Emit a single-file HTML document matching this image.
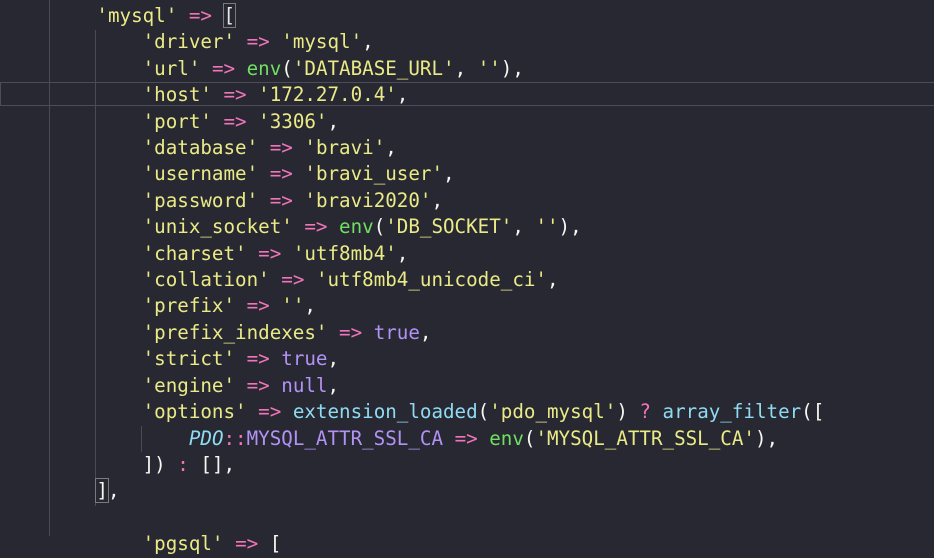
<!DOCTYPE html>
<html><head><meta charset="utf-8"><style>
html,body{margin:0;padding:0;background:#282833;width:934px;height:536px;overflow:hidden}
#c{position:absolute;left:4px;top:3px;font-family:"DejaVu Sans Mono","Liberation Mono",monospace;font-size:19.2px;line-height:26.4px;color:#f8f8f2;white-space:pre}
.s{color:#eaea86}.p{color:#f075b9}.g{color:#6fe05f}.c{color:#8fdcf2}.v{color:#b293f5}.i{color:#8fdcf2;font-style:italic}
.w{color:#e8e8e8}
.gd{position:absolute;width:1px;background:#4a4a58}
.hl{position:absolute;left:0;top:82px;width:934px;height:24px;border:1px solid #4d4d5a;border-right:none;box-sizing:border-box}
.br{outline:1px solid #7a7a80;outline-offset:0}
</style></head><body>
<div class="hl"></div>
<div class="gd" style="left:49px;top:0;height:536px"></div>
<div class="gd" style="left:95px;top:30px;height:476px"></div>
<div class="gd" style="left:141px;top:426px;height:26px"></div>
<div id="c"><span class="s">        'mysql'</span> <span class="p">=&gt;</span> <span class="w br">[</span>
<span class="s">            'driver'</span> <span class="p">=&gt;</span> <span class="s">'mysql'</span>,
<span class="s">            'url'</span> <span class="p">=&gt;</span> <span class="g">env</span>(<span class="s">'DATABASE_URL'</span>, <span class="s">''</span>),
<span class="s">            'host'</span> <span class="p">=&gt;</span> <span class="s">'172.27.0.4'</span>,
<span class="s">            'port'</span> <span class="p">=&gt;</span> <span class="s">'3306'</span>,
<span class="s">            'database'</span> <span class="p">=&gt;</span> <span class="s">'bravi'</span>,
<span class="s">            'username'</span> <span class="p">=&gt;</span> <span class="s">'bravi_user'</span>,
<span class="s">            'password'</span> <span class="p">=&gt;</span> <span class="s">'bravi2020'</span>,
<span class="s">            'unix_socket'</span> <span class="p">=&gt;</span> <span class="g">env</span>(<span class="s">'DB_SOCKET'</span>, <span class="s">''</span>),
<span class="s">            'charset'</span> <span class="p">=&gt;</span> <span class="s">'utf8mb4'</span>,
<span class="s">            'collation'</span> <span class="p">=&gt;</span> <span class="s">'utf8mb4_unicode_ci'</span>,
<span class="s">            'prefix'</span> <span class="p">=&gt;</span> <span class="s">''</span>,
<span class="s">            'prefix_indexes'</span> <span class="p">=&gt;</span> <span class="v">true</span>,
<span class="s">            'strict'</span> <span class="p">=&gt;</span> <span class="v">true</span>,
<span class="s">            'engine'</span> <span class="p">=&gt;</span> <span class="v">null</span>,
<span class="s">            'options'</span> <span class="p">=&gt;</span> <span class="c">extension_loaded</span>(<span class="s">'pdo_mysql'</span>) <span class="p">?</span> <span class="c">array_filter</span>([
                <span class="i">PDO</span><span class="p">::</span><span class="v">MYSQL_ATTR_SSL_CA</span> <span class="p">=&gt;</span> <span class="g">env</span>(<span class="s">'MYSQL_ATTR_SSL_CA'</span>),
            ]) <span class="p">:</span> [],
        <span class="br">]</span>,

<span class="s">            'pgsql'</span> <span class="p">=&gt;</span> [</div>
</body></html>
